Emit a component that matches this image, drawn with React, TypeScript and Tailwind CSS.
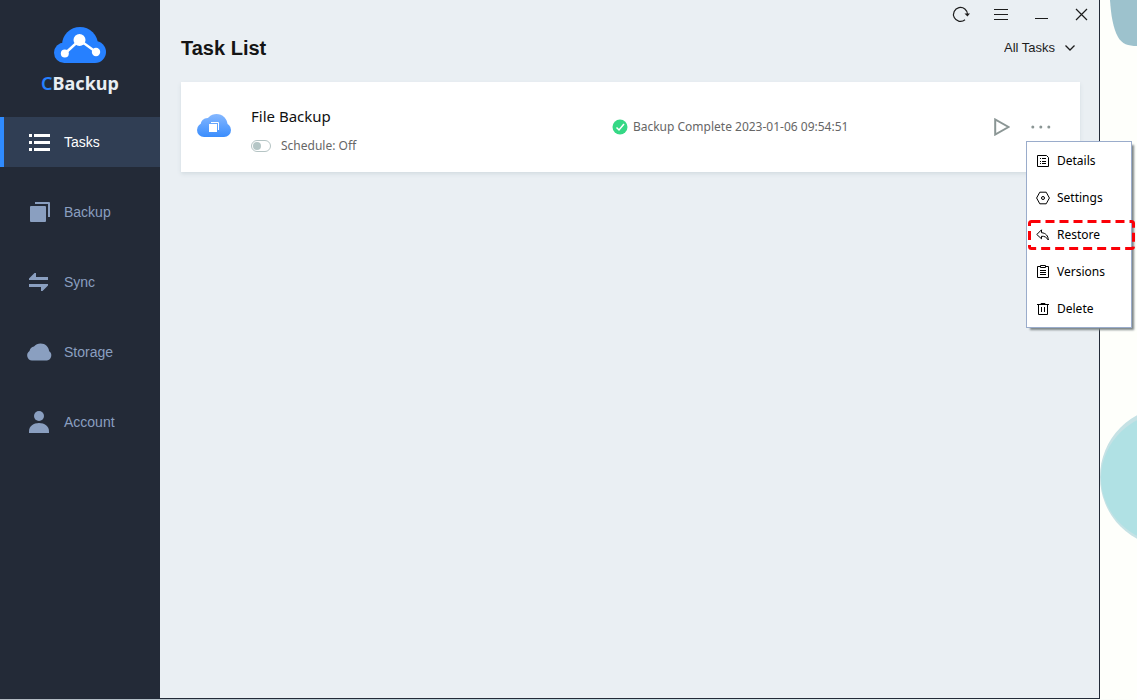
import React, { useState } from 'react'
import clsx from 'clsx'

type IconProps = { className?: string }

function LogoIcon() {
  return (
    <svg width="52" height="36" viewBox="0 0 52 36" aria-hidden="true">
      <g fill="#2680ff">
        <circle cx="26" cy="18" r="18" />
        <circle cx="10.200" cy="25.800" r="10.200" />
        <circle cx="41" cy="25" r="11" />
        <rect x="10" y="22" width="31" height="14" />
      </g>
      <path d="M11 26.500 25.500 13 42 25" fill="none" stroke="#fff" strokeWidth="2.500" />
      <circle cx="25.500" cy="13" r="6" fill="#fff" />
      <circle cx="10.800" cy="26.500" r="4" fill="#fff" />
      <circle cx="42" cy="25" r="4.200" fill="#fff" />
    </svg>
  )
}

function TasksIcon() {
  return (
    <svg width="26" height="26" viewBox="0 0 26 26" fill="currentColor" aria-hidden="true">
      <path d="M3 5h3v3H3zM8 5h16v3H8zM3 12h3v3H3zM8 12h16v3H8zM3 19h3v3H3zM8 19h16v3H8z" />
    </svg>
  )
}

function BackupIcon() {
  return (
    <svg width="26" height="26" viewBox="0 0 26 26" fill="currentColor" aria-hidden="true">
      <rect x="4" y="7" width="16" height="16" rx="1" />
      <path d="M9 3h14a1 1 0 0 1 1 1v14h-2V5H9z" />
    </svg>
  )
}

function SyncIcon() {
  return (
    <svg width="26" height="26" viewBox="0 0 26 26" fill="currentColor" aria-hidden="true">
      <path d="M3 11V9.500L8.500 4H10v4h12v3zM22 15v1.500L16.500 22H15v-4H3v-3z" />
    </svg>
  )
}

function StorageIcon() {
  return (
    <svg width="26" height="26" viewBox="0 0 26 26" fill="currentColor" aria-hidden="true">
      <path d="M6 21.500a5.200 5.200 0 0 1-2.500-9.500 6 6 0 0 1 4.500-4.500C9.500 5.400 12 4.500 14.500 4.500c5 0 8.200 3.500 8.700 7.700A5.200 5.200 0 0 1 21 21.500Z" />
    </svg>
  )
}

function AccountIcon() {
  return (
    <svg width="26" height="26" viewBox="0 0 26 26" fill="currentColor" aria-hidden="true">
      <circle cx="13" cy="7" r="5" />
      <path d="M3 24v-1.500C3 17 7.500 14 13 14s10 3 10 8.500V24Z" />
    </svg>
  )
}

function FileCloudIcon() {
  return (
    <svg width="34" height="26" viewBox="0 0 34 26" aria-hidden="true">
      <defs>
        <linearGradient id="cloud" gradientUnits="userSpaceOnUse" x1="0" y1="0" x2="0" y2="23">
          <stop offset="0" stopColor="#86b8ff" />
          <stop offset="1" stopColor="#3a8dfd" />
        </linearGradient>
      </defs>
      <g fill="url(#cloud)">
        <circle cx="19.500" cy="11" r="11" />
        <circle cx="10.500" cy="11" r="7" />
        <circle cx="7" cy="16" r="7" />
        <circle cx="27" cy="16" r="7" />
        <rect x="7" y="11" width="20" height="12" />
      </g>
      <rect x="12" y="10" width="8" height="8" fill="#fff" />
      <path d="M14 8.500h7.500V16" fill="none" stroke="#fff" />
    </svg>
  )
}

function DetailsIcon() {
  return (
    <svg width="14" height="14" viewBox="0 0 14 14" fill="none" stroke="currentColor" aria-hidden="true">
      <path d="M1.500 1.500h9l2 2v9h-11zM4 4.500h1M4 7.500h1M4 9.500h1M6 4.500h4M6 7.500h4M6 9.500h4" />
    </svg>
  )
}

function SettingsIcon() {
  return (
    <svg width="14" height="14" viewBox="0 0 14 14" fill="none" stroke="currentColor" aria-hidden="true">
      <path d="M3.800 1.200h6.400L13.400 7l-3.200 5.800H3.800L.6 7z" />
      <circle cx="7" cy="7" r="1.500" />
    </svg>
  )
}

function RestoreIcon() {
  return (
    <svg width="14" height="14" viewBox="0 0 14 14" fill="none" stroke="currentColor" aria-hidden="true">
      <path d="M5.500 1.800.8 6.500l4.700 4.300V8.300c3-.3 5 .9 6.800 3.700 0-4-2.500-7-6.800-7.300z" />
    </svg>
  )
}

function VersionsIcon() {
  return (
    <svg width="14" height="14" viewBox="0 0 14 14" fill="none" stroke="currentColor" aria-hidden="true">
      <path d="M4 1.500H1.500v11h11v-11H10M4.500.5h5v2h-5zM4 5.500h6M4 7.500h6M4 9.500h6" />
    </svg>
  )
}

function DeleteIcon() {
  return (
    <svg width="14" height="14" viewBox="0 0 14 14" fill="none" stroke="currentColor" aria-hidden="true">
      <path d="M1 2.500h12M5 2V1.500h4V2M2.500 2.500v10h9v-10M5.500 5v5M8.500 5v5" />
    </svg>
  )
}

const navItems = [
  { label: 'Tasks', icon: TasksIcon },
  { label: 'Backup', icon: BackupIcon },
  { label: 'Sync', icon: SyncIcon },
  { label: 'Storage', icon: StorageIcon },
  { label: 'Account', icon: AccountIcon },
]

const menuItems = [
  { label: 'Details', icon: DetailsIcon },
  { label: 'Settings', icon: SettingsIcon },
  { label: 'Restore', icon: RestoreIcon, highlighted: true },
  { label: 'Versions', icon: VersionsIcon },
  { label: 'Delete', icon: DeleteIcon },
]

function Sidebar() {
  const [active, setActive] = useState('Tasks')

  return (
    <aside className="w-40 shrink-0 bg-[#232a37]">
      <div className="flex h-[117px] flex-col items-center pt-[27px]">
        <LogoIcon />
        <div className="mt-2 font-['Noto_Sans',sans-serif] text-lg leading-6 font-bold text-[#e9eef3]">
          <span className="font-semibold text-[#2680ff]">C</span>Backup
        </div>
      </div>
      <nav className="flex flex-col gap-5">
        {navItems.map(({ label, icon: Icon }) => (
          <a
            key={label}
            href={`#${label.toLowerCase()}`}
            onClick={() => setActive(label)}
            className={clsx(
              'flex h-[50px] items-center gap-3 border-l-4 pl-[22px] text-sm',
              active === label
                ? 'border-[#2f8bff] bg-[#303e54] text-white'
                : 'border-transparent text-[#8a9fc0]'
            )}
          >
            <Icon />
            {label}
          </a>
        ))}
      </nav>
    </aside>
  )
}

function TitleBar() {
  return (
    <div className="flex h-7 items-center justify-end gap-[22px] pr-[9px] text-[#1c1c1c]">
      <button aria-label="Refresh">
        <svg width="18" height="18" viewBox="0 0 18 18" fill="none" stroke="currentColor" strokeWidth="1.200">
          <path d="M13 14.800A7 7 0 1 1 15.500 9.500" />
          <path d="M12.500 8.500h5.500l-2.600 3z" fill="currentColor" stroke="none" />
        </svg>
      </button>
      <button aria-label="Menu">
        <svg width="18" height="18" viewBox="0 0 18 18" stroke="currentColor">
          <path d="M2 4.500h14M2 9.500h14M2 14.500h14" />
        </svg>
      </button>
      <button aria-label="Minimize">
        <svg width="18" height="18" viewBox="0 0 18 18" stroke="currentColor">
          <path d="M3 13.500h13" />
        </svg>
      </button>
      <button aria-label="Close">
        <svg width="18" height="18" viewBox="0 0 18 18" stroke="currentColor" strokeWidth="1.200">
          <path d="M4 4l11 11M15 4 4 15" />
        </svg>
      </button>
    </div>
  )
}

function TaskMenu() {
  return (
    <div
      role="menu"
      className="absolute top-full -left-[5px] z-20 w-[106px] border border-[#9aaccb] bg-white shadow-[3px_3px_2px_-1px_#7d8687]"
    >
      {menuItems.map(({ label, icon: Icon, highlighted }) => (
        <button
          key={label}
          role="menuitem"
          className="relative flex h-[37px] w-full items-center gap-[7px] pl-[9px] text-left text-xs text-black"
        >
          <Icon />
          {label}
          {highlighted && (
            <svg className="absolute top-1 left-px" width="107" height="30" viewBox="0 0 107 30" aria-hidden="true">
              <rect x="1.500" y="1.500" width="104" height="27" rx="2" fill="none" stroke="#fb0007" strokeWidth="3" strokeDasharray="9 5" />
            </svg>
          )}
        </button>
      ))}
    </div>
  )
}

function TaskCard() {
  const [scheduled, setScheduled] = useState(false)
  const [menuOpen, setMenuOpen] = useState(true)

  return (
    <section className="mt-3.5 grid grid-cols-[54px_17fr_18fr_auto] items-center bg-white pr-[29px] pl-4 font-['Noto_Sans',sans-serif] shadow-[0_2px_4px_#d3dce1]">
      <FileCloudIcon />
      <div className="pt-[22px] pb-3.5">
        <h2 className="text-[15px] leading-6 text-[#111]">File Backup</h2>
        <label className="mt-1.5 flex h-6 items-center gap-2.5 text-xs text-[#666]">
          <input
            type="checkbox"
            role="switch"
            checked={scheduled}
            onChange={(e) => setScheduled(e.target.checked)}
            className="flex h-3 w-5 appearance-none items-center rounded-full border border-[#b5c4c4] bg-white px-px before:h-2 before:w-2 before:rounded-full before:bg-[#b5c6c6] checked:justify-end checked:before:bg-[#2f8bff]"
          />
          Schedule: {scheduled ? 'On' : 'Off'}
        </label>
      </div>
      <div className="flex items-center gap-[5px] text-xs text-[#666]">
        <svg width="16" height="16" viewBox="0 0 16 16" aria-hidden="true">
          <circle cx="8" cy="8" r="7.500" fill="#35d885" />
          <path d="m4.500 8.500 2.500 2.500 5-6" fill="none" stroke="#fff" strokeWidth="1.500" />
        </svg>
        Backup Complete 2023-01-06 09:54:51
      </div>
      <div className="flex items-center gap-[21px]">
        <button aria-label="Run task">
          <svg width="16" height="18" viewBox="0 0 16 18" fill="none" stroke="#8b9695" strokeWidth="2">
            <path d="M1.200 1.500v15L14.500 9z" />
          </svg>
        </button>
        <div className="relative">
          <button
            aria-label="More actions"
            aria-expanded={menuOpen}
            onClick={() => setMenuOpen(!menuOpen)}
            className="flex h-7 w-5 items-center"
          >
            <svg width="20" height="4" viewBox="0 0 20 4" fill="#8b9695">
              <circle cx="1.800" cy="2" r="1.500" />
              <circle cx="9.800" cy="2" r="1.500" />
              <circle cx="17.800" cy="2" r="1.500" />
            </svg>
          </button>
          {menuOpen && <TaskMenu />}
        </div>
      </div>
    </section>
  )
}

// Strip of wallpaper visible beside the window
function Wallpaper({ className }: IconProps) {
  return (
    <svg className={className} width="37" height="600" viewBox="0 0 37 600" aria-hidden="true">
      <path d="M10 0c1 15 3 28 8 37 4 7 10 9 19 9V0Z" fill="#9dc2cd" />
      <circle cx="70" cy="477" r="70" fill="#c5e2e5" />
      <ellipse cx="71" cy="478" rx="70" ry="66" fill="#b0e1e4" />
    </svg>
  )
}

export default function App() {
  return (
    <div className="flex min-h-screen flex-col overflow-hidden bg-[#fefffb] font-['Liberation_Sans',Arial,sans-serif]">
      <div className="flex flex-1">
        <div className="relative z-10 flex min-w-0 flex-1 border-r border-b border-[#232a37]">
          <Sidebar />
          <main className="min-w-0 flex-1 bg-[#eaeff3]">
            <TitleBar />
            <div className="pr-[19px] pl-[21px]">
              <header className="flex h-10 items-center justify-between">
                <h1 className="text-xl font-bold text-[#151515]">Task List</h1>
                <div className="relative flex items-center">
                  <select aria-label="Filter tasks" className="appearance-none pr-6 text-[13px] text-[#1c1c1c]">
                    <option>All Tasks</option>
                  </select>
                  <svg className="pointer-events-none absolute right-1" width="12" height="8" viewBox="0 0 12 8" fill="none" stroke="#1c1c1c" strokeWidth="1.300" aria-hidden="true">
                    <path d="m1.500 1.500 4.500 4.500 4.500-4.500" />
                  </svg>
                </div>
              </header>
              <TaskCard />
            </div>
          </main>
        </div>
        <Wallpaper className="shrink-0" />
      </div>
      <div className="h-px bg-linear-to-r from-[#b5bcc4] via-[#b9d3da] to-[#fefffb]" />
    </div>
  )
}
